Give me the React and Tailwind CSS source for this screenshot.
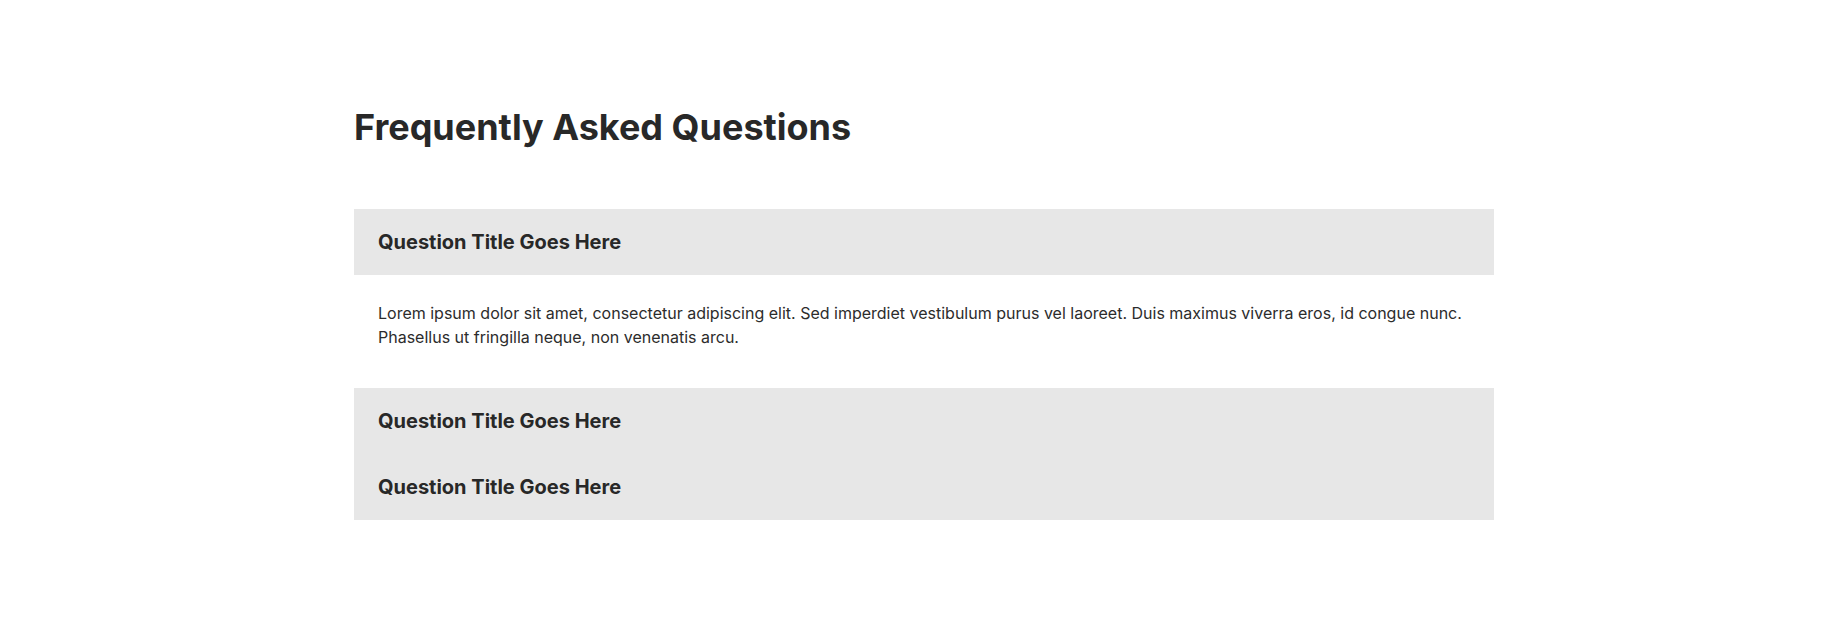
export default function App() {
  const faqs = [
    {
      q: "Question Title Goes Here",
      a: "Lorem ipsum dolor sit amet, consectetur adipiscing elit. Sed imperdiet vestibulum purus vel laoreet. Duis maximus viverra eros, id congue nunc. Phasellus ut fringilla neque, non venenatis arcu.",
      open: true,
    },
    { q: "Question Title Goes Here", open: false },
    { q: "Question Title Goes Here", open: false },
  ];

  return (
    <div className="min-h-[626px] bg-white font-['Inter',sans-serif] text-[#282828]">
      <section className="mx-auto w-[1140px] pt-[107px] pb-16">
        <h1 className="text-4xl font-bold leading-10">Frequently Asked Questions</h1>

        <div className="mt-[62px] flex flex-col">
          {faqs.map((item, i) => (
            <div key={i}>
              <button className="flex h-[66px] w-full items-center bg-[#e7e7e7] px-6 text-left text-xl font-bold">
                {item.q}
              </button>
              {item.open && (
                <p className="px-6 pt-[26px] pb-[39px] text-base leading-6 text-[#2c2c2c]">
                  {item.a}
                </p>
              )}
            </div>
          ))}
        </div>
      </section>
    </div>
  );
}
